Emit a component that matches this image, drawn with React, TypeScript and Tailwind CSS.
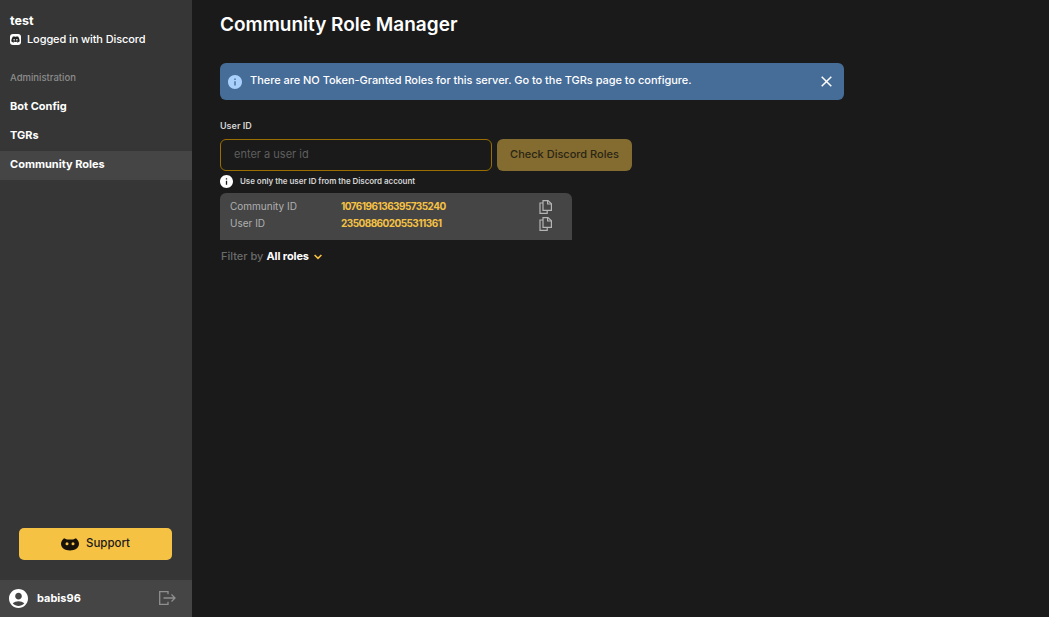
import { FaDiscord } from 'react-icons/fa';

function InfoIcon({ className }: { className: string }) {
    return (
        <svg className={className} viewBox="2 2 20 20" fill="currentColor">
            <path d="M12 2C6.48 2 2 6.48 2 12s4.48 10 10 10 10-4.48 10-10S17.52 2 12 2zm1 15h-2v-6h2v6zm0-8h-2V7h2v2z" />
        </svg>
    );
}

function CopyIcon() {
    return (
        <svg className="w-[13px] h-[14px] text-[#b5b5b5]" viewBox="0 0 13 14" fill="none" stroke="currentColor" strokeWidth="1.2">
            <path d="M4 .6h5l3.400 3.200v6.600H4z" />
            <path d="M8.600.6v3.400h3.800" />
            <path d="M4 3H1v10.400h7.200v-3" />
        </svg>
    );
}

export default function App() {
    return (
        <div className="flex h-screen bg-[#1a1a1a] font-['Inter',sans-serif] text-white overflow-hidden">
            {/* sidebar */}
            <aside className="w-[192px] shrink-0 bg-[#363636] flex flex-col">
                <div className="px-[10px] pt-[13px]">
                    <div className="text-[12.5px] leading-[16px] font-bold">test</div>
                    <div className="flex items-center gap-[6px] mt-[3px]">
                        <span className="w-[11px] h-[11px] bg-white rounded-[3px] flex items-center justify-center text-[#222]">
                            <FaDiscord className="w-[9px] h-[9px]" />
                        </span>
                        <span className="text-[11px] leading-[15px] font-medium tracking-[-0.1px]">Logged in with Discord</span>
                    </div>
                </div>
                <div className="px-[10px] mt-[24px] text-[9.5px] leading-[14px] font-medium text-[#8c8c8c]">Administration</div>
                <nav className="mt-[8px] flex flex-col text-[11px] font-bold">
                    <div className="h-[29px] px-[10px] pb-[3px] flex items-center">Bot Config</div>
                    <div className="h-[29px] px-[10px] pb-[3px] flex items-center">TGRs</div>
                    <div className="h-[29px] px-[10px] pb-[3px] flex items-center bg-[#454545]">Community Roles</div>
                </nav>
                <div className="mt-auto px-[19px] pb-[20px]">
                    <button className="w-[153px] h-[32px] bg-[#f6c244] rounded-[5px] flex items-center justify-center gap-[7px] text-[#1a1a1a] text-[11.5px] font-medium">
                        <svg className="w-[18px] h-[14px]" viewBox="0 0 18 14" fill="#16120a">
                            <path d="M3 1.2 6 2.400h6l3-1.200c1.600 1.500 3 3.200 3 5.600C18 11 14 13.500 9 13.500S0 11 0 6.800C0 4.400 1.400 2.700 3 1.200z" />
                            <circle cx="6" cy="6.800" r="1.500" fill="#f6c244" />
                            <circle cx="12" cy="6.800" r="1.500" fill="#f6c244" />
                        </svg>
                        Support
                    </button>
                </div>
                <div className="h-[37px] bg-[#454545] flex items-center pl-[9px] pr-[16px]">
                    <svg className="w-[19px] h-[19px] text-white" viewBox="2 2 20 20" fill="currentColor">
                        <path d="M12 2C6.480 2 2 6.480 2 12s4.480 10 10 10 10-4.480 10-10S17.520 2 12 2zm0 4c1.930 0 3.500 1.570 3.500 3.500S13.930 13 12 13s-3.500-1.570-3.500-3.500S10.070 6 12 6zm0 14c-2.030 0-4.430-.820-6.140-2.880C7.550 15.800 9.680 15 12 15s4.450.800 6.140 2.120C16.430 19.180 14.030 20 12 20z" />
                    </svg>
                    <span className="ml-[9px] pb-[1px] text-[11px] font-bold">babis96</span>
                    <svg className="ml-auto mb-[1px] w-[17px] h-[14px] text-[#8f8f8f]" viewBox="0 0 17 14" fill="none" stroke="currentColor" strokeWidth="1.300">
                        <path d="M9 3.200V.7H.7v12.600H9v-2.500" />
                        <path d="M4.500 7h11.500M12.500 3.500 16 7l-3.500 3.500" />
                    </svg>
                </div>
            </aside>

            {/* main */}
            <main className="flex-1 pl-[28px]">
                <h1 className="mt-[12px] text-[19px] leading-[25px] font-semibold">Community Role Manager</h1>

                <div className="mt-[26px] w-[624px] h-[37px] bg-[#466c98] rounded-[6px] flex items-center pl-[8px] pr-[12px]">
                    <InfoIcon className="w-[14px] h-[14px] text-[#a9d0fb]" />
                    <span className="ml-[8px] text-[11px] font-medium tracking-[-0.03px] -mt-[3px]">There are NO Token-Granted Roles for this server. Go to the TGRs page to configure.</span>
                    <svg className="ml-auto w-[11px] h-[11px] text-white" viewBox="0 0 11 11" fill="none" stroke="currentColor" strokeWidth="1.500">
                        <path d="M.7.700l9.600 9.600M10.300.700L.7 10.300" />
                    </svg>
                </div>

                <div className="mt-[20px] text-[9px] leading-[12px] font-semibold text-[#d4d4d4]">User ID</div>
                <div className="mt-[7px] flex gap-[5px]">
                    <input
                        placeholder="enter a user id"
                        className="w-[272px] h-[32px] bg-transparent border border-[#9a6f00] rounded-[6px] px-[13px] pb-[3px] text-[11px] outline-none placeholder:text-[#5f5f5f]"
                    />
                    <button className="w-[135px] h-[32px] bg-[#846b2f] rounded-[6px] pb-[2px] text-[#2a2616] text-[11px] font-medium">Check Discord Roles</button>
                </div>
                <div className="mt-[3px] flex items-center gap-[7px]">
                    <InfoIcon className="w-[13px] h-[13px] mt-[1px] text-white" />
                    <span className="text-[8px] leading-[12px] font-semibold tracking-[-0.05px] text-[#d4d4d4]">Use only the user ID from the Discord account</span>
                </div>

                <div className="mt-[5px] w-[352px] h-[47px] bg-[#454545] rounded-t-[6px] pl-[10px] pr-[20px] pt-[5px] text-[10px]">
                    <div className="flex items-center h-[17px]">
                        <span className="w-[111px] text-[#b0b0b0]">Community ID</span>
                        <span className="text-[#f6c244] font-bold tracking-[-0.55px]">1076196136395735240</span>
                        <span className="ml-auto"><CopyIcon /></span>
                    </div>
                    <div className="flex items-center h-[17px]">
                        <span className="w-[111px] text-[#b0b0b0]">User ID</span>
                        <span className="text-[#f6c244] font-bold tracking-[-0.55px]">235088602055311361</span>
                        <span className="ml-auto"><CopyIcon /></span>
                    </div>
                </div>

                <div className="mt-[8px] pl-[1px] flex items-center text-[11px] leading-[16px] font-medium">
                    <span className="text-[#6b6b6b]">Filter by</span>
                    <span className="ml-[3px] font-bold tracking-[-0.1px]">All roles</span>
                    <svg className="ml-[5px] mt-[1px] w-[8px] h-[6px] text-[#f6c244]" viewBox="0 0 8 6" fill="none" stroke="currentColor" strokeWidth="1.600">
                        <path d="M.6 1l3.400 3.400L7.400 1" />
                    </svg>
                </div>
            </main>
        </div>
    );
}
